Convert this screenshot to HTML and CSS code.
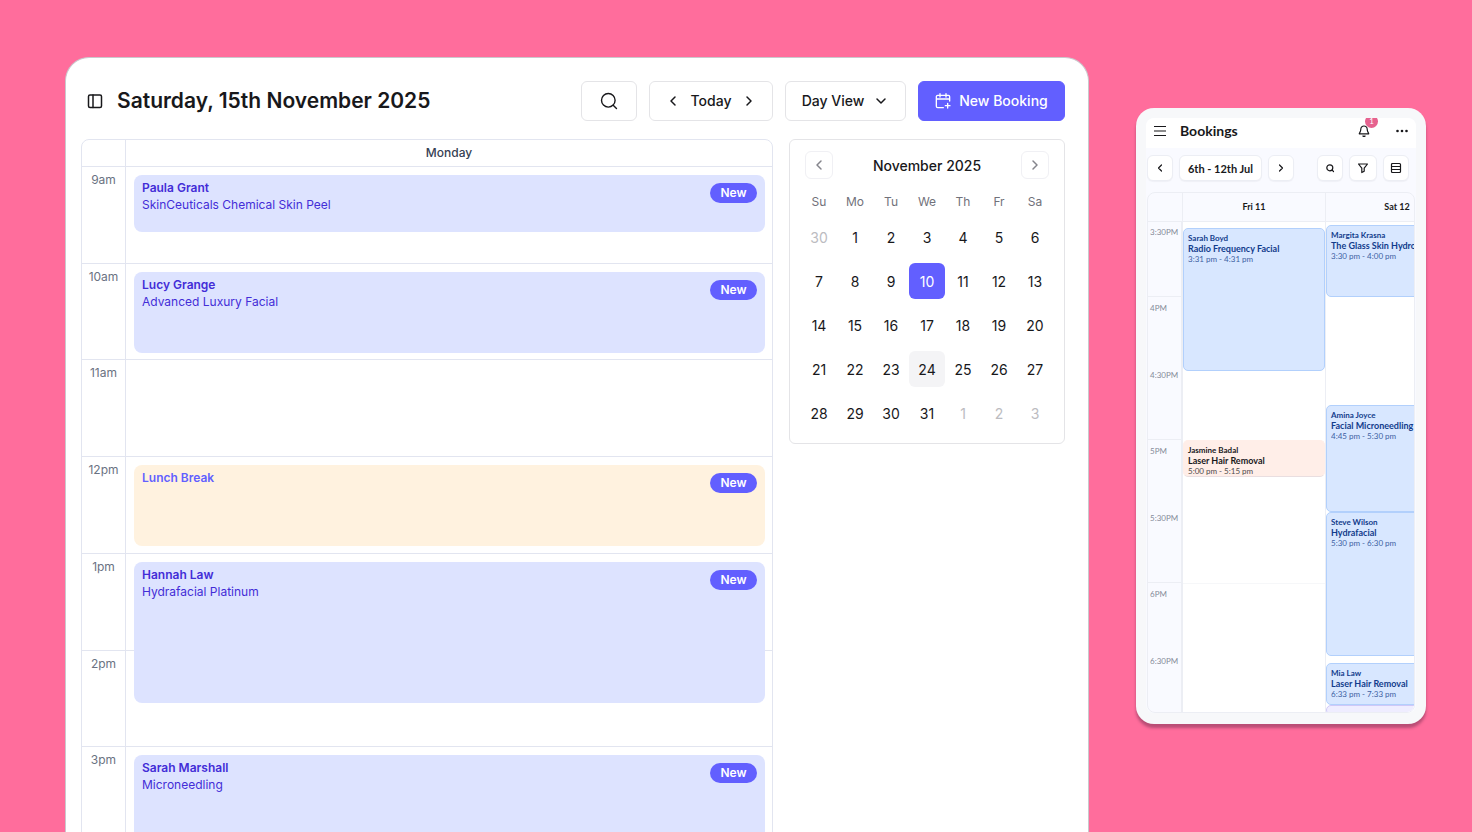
FILE: index.html
```html
<!DOCTYPE html>
<html lang="en">
<head>
    <meta charset="UTF-8">
    <meta name="viewport" content="width=device-width, initial-scale=1.0">
    <title>Bookings</title>
    <link rel="stylesheet" href="styles.css">
</head>
<body>

<!-- Desktop calendar -->
<main class="desktop">
    <header class="topbar">
        <button class="icon-button" aria-label="Toggle sidebar">
            <svg class="icon icon-16 bold" viewBox="0 0 16 16"><rect x="1.5" y="2" width="13" height="12.500" rx="1.5"/><path d="M6 2v12.500"/></svg>
        </button>
        <h1>Saturday, 15th November 2025</h1>
        <div class="actions">
            <button class="btn btn-search" aria-label="Search">
                <svg class="icon icon-20" viewBox="0 0 20 20"><circle cx="9.3" cy="9.3" r="6.8"/><path d="M14.2 14.2l3.3 3.3"/></svg>
            </button>
            <div class="btn btn-today">
                <button class="icon-button" aria-label="Previous day"><svg class="icon icon-16 bold" viewBox="0 0 16 16"><path d="M10 4L6 8l4 4"/></svg></button>
                <button class="text-button">Today</button>
                <button class="icon-button" aria-label="Next day"><svg class="icon icon-16 bold" viewBox="0 0 16 16"><path d="M6 4l4 4-4 4"/></svg></button>
            </div>
            <button class="btn btn-view">Day View
                <svg class="icon icon-16 bold" viewBox="0 0 16 16"><path d="M4 6l4 4 4-4"/></svg>
            </button>
            <button class="btn btn-primary">
                <svg class="icon icon-16 bold" viewBox="0 0 24 24"><path d="M7.500 1v5M16.500 1v5M22 12V5.500a2 2 0 0 0-2-2H4a2 2 0 0 0-2 2V20a2 2 0 0 0 2 2h8.500M2 9h20M15.500 19h7M19 15.500v7"/></svg>
                New Booking
            </button>
        </div>
    </header>

    <div class="content">
        <section class="schedule">
            <div class="schedule-head"></div>
            <div class="schedule-head">Monday</div>
            <div class="hours">
                <div>9am</div>
                <div>10am</div>
                <div>11am</div>
                <div>12pm</div>
                <div>1pm</div>
                <div>2pm</div>
                <div>3pm</div>
            </div>
            <div class="day">
                <div class="slot row-1"></div>
                <div class="slot row-2"></div>
                <div class="slot row-3"></div>
                <div class="slot row-4"></div>
                <div class="slot row-5"></div>
                <div class="slot row-6"></div>
                <div class="slot row-7"></div>
                <article class="event row-1 short">
                    <div><h2>Paula Grant</h2><p>SkinCeuticals Chemical Skin Peel</p></div>
                    <span class="tag">New</span>
                </article>
                <article class="event row-2">
                    <div><h2>Lucy Grange</h2><p>Advanced Luxury Facial</p></div>
                    <span class="tag">New</span>
                </article>
                <article class="event break row-4">
                    <div><h2>Lunch Break</h2></div>
                    <span class="tag">New</span>
                </article>
                <article class="event row-5 long">
                    <div><h2>Hannah Law</h2><p>Hydrafacial Platinum</p></div>
                    <span class="tag">New</span>
                </article>
                <article class="event row-7 long">
                    <div><h2>Sarah Marshall</h2><p>Microneedling</p></div>
                    <span class="tag">New</span>
                </article>
            </div>
        </section>

        <aside class="month">
            <div class="month-head">
                <button aria-label="Previous month"><svg class="icon icon-16 bold" viewBox="0 0 16 16"><path d="M10 4L6 8l4 4"/></svg></button>
                <h2>November 2025</h2>
                <button aria-label="Next month"><svg class="icon icon-16 bold" viewBox="0 0 16 16"><path d="M6 4l4 4-4 4"/></svg></button>
            </div>
            <table>
                <thead>
                    <tr><th>Su</th><th>Mo</th><th>Tu</th><th>We</th><th>Th</th><th>Fr</th><th>Sa</th></tr>
                </thead>
                <tbody>
                    <tr><td><button class="muted">30</button></td><td><button>1</button></td><td><button>2</button></td><td><button>3</button></td><td><button>4</button></td><td><button>5</button></td><td><button>6</button></td></tr>
                    <tr><td><button>7</button></td><td><button>8</button></td><td><button>9</button></td><td><button class="selected">10</button></td><td><button>11</button></td><td><button>12</button></td><td><button>13</button></td></tr>
                    <tr><td><button>14</button></td><td><button>15</button></td><td><button>16</button></td><td><button>17</button></td><td><button>18</button></td><td><button>19</button></td><td><button>20</button></td></tr>
                    <tr><td><button>21</button></td><td><button>22</button></td><td><button>23</button></td><td><button class="today">24</button></td><td><button>25</button></td><td><button>26</button></td><td><button>27</button></td></tr>
                    <tr><td><button>28</button></td><td><button>29</button></td><td><button>30</button></td><td><button>31</button></td><td><button class="muted">1</button></td><td><button class="muted">2</button></td><td><button class="muted">3</button></td></tr>
                </tbody>
            </table>
        </aside>
    </div>
</main>

<!-- Mobile calendar -->
<section class="phone">
    <div class="screen">
        <header class="phone-bar">
            <button class="icon-button" aria-label="Menu"><svg class="icon icon-12" viewBox="0 0 12 12"><path d="M.5 1.500h11M.5 6h11M.5 10.500h11"/></svg></button>
            <h2>Bookings</h2>
            <button class="icon-button bell" aria-label="Notifications">
                <svg class="icon icon-12" viewBox="0 0 12 12"><path d="M6 1a3.200 3.200 0 0 0-3.200 3.200c0 2.800-1.500 3.500-1.500 4.600h9.400c0-1.100-1.500-1.800-1.500-4.600A3.200 3.200 0 0 0 6 1zM5 11a1.300 1.300 0 0 0 2 0"/></svg>
                <span class="count">1</span>
            </button>
            <button class="icon-button" aria-label="More"><svg class="icon-12 dots" viewBox="0 0 12 12"><circle cx="1.500" cy="6" r="1.300"/><circle cx="6" cy="6" r="1.300"/><circle cx="10.500" cy="6" r="1.300"/></svg></button>
        </header>

        <div class="phone-tools">
            <button aria-label="Previous week"><svg class="icon icon-12" viewBox="0 0 12 12"><path d="M7.500 3l-3 3 3 3"/></svg></button>
            <button class="range">6th - 12th Jul</button>
            <button aria-label="Next week"><svg class="icon icon-12" viewBox="0 0 12 12"><path d="M4.500 3l3 3-3 3"/></svg></button>
            <button class="push" aria-label="Search"><svg class="icon icon-12" viewBox="0 0 12 12"><circle cx="5.800" cy="5.800" r="3"/><path d="M8.200 8.200l1.300 1.300"/></svg></button>
            <button class="filter" aria-label="Filter"><svg class="icon icon-12" viewBox="0 0 12 12"><path d="M1.500 2h9L7.200 6.200v3L4.800 10.500V6.200z"/></svg></button>
            <button aria-label="Rows"><svg class="icon icon-12" viewBox="0 0 12 12"><rect x="1.500" y="1.500" width="9" height="9" rx="1"/><path d="M1.500 4.500h9M1.500 7.500h9"/></svg></button>
        </div>

        <div class="week">
            <div class="week-head"></div>
            <div class="week-head">Fri 11</div>
            <div class="week-head">Sat 12</div>
            <div class="times">
                <div class="block first"><span>3:30PM</span></div>
                <div class="block"><span>4PM</span><span>4:30PM</span></div>
                <div class="block"><span>5PM</span><span>5:30PM</span></div>
                <div class="block"><span>6PM</span><span>6:30PM</span></div>
            </div>
            <div class="week-day friday">
                <article class="appt row-2"><h3>Sarah Boyd</h3><h4>Radio Frequency Facial</h4><p>3:31 pm - 4:31 pm</p></article>
                <article class="appt peach row-4"><h3>Jasmine Badal</h3><h4>Laser Hair Removal</h4><p>5:00 pm - 5:15 pm</p></article>
                <div class="hour-line row-5"></div>
            </div>
            <div class="week-day saturday">
                <article class="appt row-2"><h3>Margita Krasna</h3><h4>The Glass Skin Hydro</h4><p>3:30 pm - 4:00 pm</p></article>
                <article class="appt row-4"><h3>Amina Joyce</h3><h4>Facial Microneedling</h4><p>4:45 pm - 5:30 pm</p></article>
                <article class="appt row-5"><h3>Steve Wilson</h3><h4>Hydrafacial</h4><p>5:30 pm - 6:30 pm</p></article>
                <article class="appt row-7"><h3>Mia Law</h3><h4>Laser Hair Removal</h4><p>6:33 pm - 7:33 pm</p></article>
                <article class="appt lilac row-8"></article>
            </div>
        </div>
    </div>
</section>

</body>
</html>
```

FILE: styles.css
```css
* {
    margin: 0;
    padding: 0;
    box-sizing: border-box;
}
body {
    display: flex;
    align-items: flex-start;
    gap: 47px;
    height: 100vh;
    padding: 57px 46px 0 65px;
    overflow: hidden;
    background: #ff6d9c;
    color: #18181b;
    font-family: Inter, "Open Sans", sans-serif;
}
button {
    border: none;
    background: none;
    color: inherit;
    font: inherit;
    cursor: pointer;
}
.icon {
    flex: none;
    fill: none;
    stroke: currentColor;
    stroke-width: 1.2;
    stroke-linecap: round;
    stroke-linejoin: round;
}
.icon.bold {
    stroke-width: 1.5;
}
.icon-12 {
    width: 12px;
    height: 12px;
}
.icon-16 {
    width: 16px;
    height: 16px;
}
.icon-20 {
    width: 20px;
    height: 20px;
    stroke-width: 1.4;
}
.icon-button {
    display: flex;
    align-items: center;
}

/* Desktop calendar */
.desktop {
    flex: 1;
    align-self: stretch;
    min-width: 0;
    padding: 23px 23px 0 15px;
    border: 1px solid #c9c9cd;
    border-bottom: none;
    border-radius: 24px 24px 0 0;
    background: #fff;
    overflow: hidden;
}
.topbar {
    display: flex;
    align-items: center;
    padding-left: 6px;
    margin-bottom: 18px;
}
h1 {
    margin-left: 14px;
    font-size: 21px;
    font-weight: 600;
    line-height: 32px;
    white-space: nowrap;
}
.actions {
    display: flex;
    gap: 12px;
    margin-left: auto;
}
.btn {
    display: flex;
    align-items: center;
    justify-content: center;
    height: 40px;
    padding-bottom: 1px;
    border: 1px solid #e4e4e7;
    border-radius: 6px;
    font-size: 14px;
    font-weight: 500;
    white-space: nowrap;
}
.btn-search {
    width: 56px;
}
.btn-today {
    gap: 10px;
    width: 124px;
}
.btn-view {
    gap: 9px;
    width: 121px;
}
.btn-primary {
    gap: 8px;
    width: 147px;
    border-color: #625fff;
    background: #625fff;
    color: #fff;
}
.btn-primary .icon {
    stroke-width: 2;
}
.content {
    display: flex;
    align-items: flex-start;
    gap: 16px;
}
.schedule {
    display: grid;
    flex: 1;
    grid-template-columns: 44px 1fr;
    grid-template-rows: 27px 677px;
    border: 1px solid #e2e5f0;
    border-radius: 8px 8px 0 0;
    font-size: 12px;
}
.schedule-head {
    border-bottom: 1px solid #e2e5f0;
    color: #364153;
    font-weight: 500;
    line-height: 26px;
    text-align: center;
}
.schedule-head:first-child, .hours {
    border-right: 1px solid #e2e5f0;
}
.hours, .day {
    display: grid;
    grid-template-rows: repeat(7, minmax(0, 1fr));
}
.hours div {
    padding-top: 4px;
    border-bottom: 1px solid #e2e5f0;
    color: #6a7282;
    line-height: 18px;
    text-align: center;
}
.slot, .event {
    grid-column: 1;
}
.slot {
    border-bottom: 1px solid #e2e5f0;
}
.row-1 { grid-row: 1; }
.row-2 { grid-row: 2; }
.row-3 { grid-row: 3; }
.row-4 { grid-row: 4; }
.row-5 { grid-row: 5; }
.row-6 { grid-row: 6; }
.row-7 { grid-row: 7; }
.row-8 { grid-row: 8; }
.event {
    display: flex;
    align-items: flex-start;
    justify-content: space-between;
    z-index: 1;
    height: 81px;
    margin: 8px 7px 0 8px;
    padding: 4px 8px;
    border-radius: 8px;
    background: #dde3ff;
    color: #432dd7;
}
.event.short {
    height: 57px;
}
.event.long {
    height: 141px;
}
.event.break {
    background: #fff2df;
    color: #625fff;
}
.event h2 {
    font-size: 12px;
    font-weight: 600;
    line-height: 17px;
}
.event p {
    line-height: 17px;
}
.tag {
    width: 47px;
    margin-top: 4px;
    border-radius: 10px;
    background: #625fff;
    color: #fff;
    font-weight: 600;
    line-height: 20px;
    text-align: center;
}

/* Month picker */
.month {
    width: 276px;
    padding: 11px 11px 8px;
    border: 1px solid #e4e4e7;
    border-radius: 6px;
}
.month-head {
    display: flex;
    align-items: center;
    justify-content: space-between;
    padding: 0 4px;
    margin-bottom: 8px;
}
.month-head h2 {
    font-size: 14px;
    font-weight: 500;
}
.month-head button {
    display: flex;
    align-items: center;
    justify-content: center;
    width: 28px;
    height: 28px;
    border: 1px solid #f0f0f4;
    border-radius: 6px;
    color: #85858c;
}
.month table {
    width: 100%;
    border-collapse: collapse;
    table-layout: fixed;
}
.month th {
    height: 28px;
    color: #71717a;
    font-size: 12px;
    font-weight: 400;
}
.month td {
    height: 44px;
    text-align: center;
}
.month td button {
    width: 36px;
    height: 36px;
    border-radius: 6px;
    font-size: 14px;
}
.month td .muted {
    color: #bcbcc1;
}
.month td .selected {
    background: #625fff;
    color: #fff;
}
.month td .today {
    background: #f4f4f6;
}

/* Mobile calendar */
.phone {
    flex: none;
    width: 290px;
    margin-top: 51px;
    padding: 10px 10px 11px;
    border-radius: 18px;
    background: #f7f8fa;
    box-shadow: 0 4px 3px rgba(80, 30, 60, 0.4);
    font-family: Lato, Inter, sans-serif;
}
.screen {
    border-radius: 8px;
    background: #f9faff;
    overflow: hidden;
}
.phone-bar {
    display: flex;
    align-items: center;
    height: 30px;
    padding: 0 8px 4px;
    background: #fff;
}
.phone-bar h2 {
    margin-left: 14px;
    font-size: 14px;
    font-weight: 700;
    line-height: 26px;
}
.bell {
    position: relative;
    margin-left: auto;
    margin-right: 26px;
}
.count {
    position: absolute;
    top: -10px;
    left: 7px;
    width: 13px;
    border-radius: 7px;
    background: #e6628f;
    color: #fff;
    font-size: 8px;
    line-height: 13px;
    text-align: center;
}
.dots {
    fill: currentColor;
}
.phone-tools {
    display: flex;
    gap: 6px;
    padding: 7px 7px 11px 1px;
}
.phone-tools button {
    display: flex;
    align-items: center;
    justify-content: center;
    width: 26px;
    height: 26px;
    border: 1px solid #eceef4;
    border-radius: 6px;
    background: #fff;
    box-shadow: 0 1px 1px rgba(20, 30, 60, 0.04);
}
.phone-tools .range {
    width: 83px;
    font-size: 11px;
    font-weight: 700;
    white-space: nowrap;
}
.phone-tools .push {
    margin-left: auto;
}
.phone-tools .filter {
    width: 28px;
}
.week {
    display: grid;
    grid-template-columns: 35px 143px 143px;
    grid-template-rows: 29px 490px;
    width: 268px;
    margin-left: 1px;
    border: 1px solid #eceef4;
    border-radius: 8px;
    overflow: hidden;
}
.week-head {
    border-right: 1px solid #eceef4;
    border-bottom: 1px solid #eceef4;
    font-size: 9px;
    font-weight: 700;
    line-height: 28px;
    text-align: center;
}
.times {
    border-right: 2px solid #eceef4;
    color: #858b99;
    font-size: 8px;
}
.block {
    display: grid;
    grid-template-rows: 67px 67px;
    height: 143px;
    padding: 6px 0 0 2px;
    border-bottom: 1px solid #eceef4;
    line-height: 10px;
}
.block.first {
    height: 75px;
    padding-top: 5px;
}
.block:last-child {
    border-bottom: none;
}
.week-day {
    display: grid;
    align-content: start;
    background: #fff;
}
.friday {
    grid-template-rows: 6px 143px 69px 37px 107px;
    border-right: 1px solid #eceef4;
}
.saturday {
    grid-template-rows: 3px 72px 108px 107px 144px 7px 42px 8px;
}
.hour-line {
    border-bottom: 1px solid #f6f7f9;
}
.appt {
    padding: 4px;
    border: 1px solid #b2d0fc;
    border-radius: 5px;
    background: #d8e7ff;
    color: #123c8c;
    white-space: nowrap;
    overflow: hidden;
}
.appt h3 {
    font-size: 8px;
    font-weight: 700;
    line-height: 10px;
}
.appt h4 {
    font-size: 9px;
    font-weight: 700;
    line-height: 11px;
}
.appt p {
    font-size: 8px;
    line-height: 10px;
    opacity: 0.8;
}
.appt.peach {
    border-color: #ffeee8 #ffeee8 #e9dee0;
    background: #ffeee8;
    color: #18181b;
}
.appt.lilac {
    border-color: #cfc8f8;
    background: #efedff;
}
```
